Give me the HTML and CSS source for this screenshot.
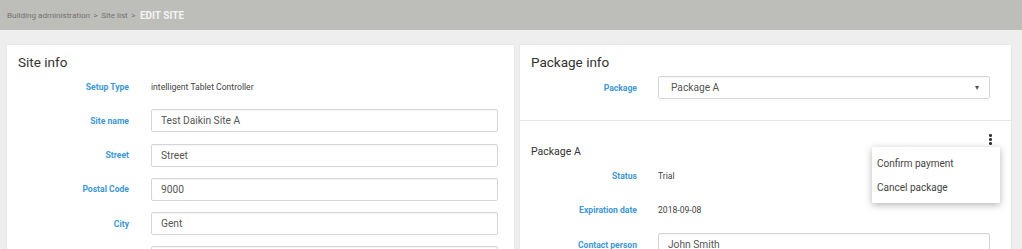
FILE: index.html
```html
<!DOCTYPE html>
<html lang="en">
<head>
    <meta charset="UTF-8">
    <meta name="viewport" content="width=device-width, initial-scale=1.0">
    <title>Edit site</title>
    <link rel="stylesheet" href="styles.css">
</head>
<body>
    <div class="topbar">
        <span class="crumb">Building administration</span>
        <span class="sep">&gt;</span>
        <span class="crumb">Site list</span>
        <span class="sep">&gt;</span>
        <span class="current">EDIT SITE</span>
    </div>

    <div class="main">
        <div class="card card-site">
            <h2>Site info</h2>
            <div class="rows">
                <div class="row">
                    <label>Setup Type</label>
                    <span class="value">intelligent Tablet Controller</span>
                </div>
                <div class="row">
                    <label>Site name</label>
                    <input type="text" value="Test Daikin Site A">
                </div>
                <div class="row">
                    <label>Street</label>
                    <input type="text" value="Street">
                </div>
                <div class="row">
                    <label>Postal Code</label>
                    <input type="text" value="9000">
                </div>
                <div class="row">
                    <label>City</label>
                    <input type="text" value="Gent">
                </div>
                <div class="row">
                    <label></label>
                    <input type="text" value="">
                </div>
            </div>
        </div>

        <div class="card card-package">
            <div class="section section-top">
                <h2>Package info</h2>
                <div class="row">
                    <label>Package</label>
                    <div class="select">
                        <span>Package A</span>
                        <span class="arrow">&#9662;</span>
                    </div>
                </div>
            </div>
            <div class="section section-detail">
                <h3>Package A</h3>
                <div class="kebab"><i></i><i></i><i></i></div>
                <div class="menu">
                    <div class="menu-item">Confirm payment</div>
                    <div class="menu-item">Cancel package</div>
                </div>
                <div class="rows">
                    <div class="row">
                        <label>Status</label>
                        <span class="value">Trial</span>
                    </div>
                    <div class="row">
                        <label>Expiration date</label>
                        <span class="value">2018-09-08</span>
                    </div>
                    <div class="row">
                        <label>Contact person</label>
                        <input type="text" value="John Smith">
                    </div>
                </div>
            </div>
        </div>
    </div>
</body>
</html>
```

FILE: styles.css
```css
body {
    margin: 0;
    font-family: Roboto, 'Liberation Sans', sans-serif;
    background: #eeeeee;
    color: #333;
    height: 249px;
    overflow: hidden;
}
.topbar {
    height: 30px;
    background: #bdbdb9;
    display: flex;
    align-items: center;
    padding-left: 7px;
    gap: 3.5px;
    font-size: 8.1px;
    color: #737373;
}
.topbar .current {
    color: #f4f4f4;
    font-weight: bold;
    font-size: 10px;
    margin-left: 1px;
}
.main {
    display: flex;
    gap: 6px;
    padding: 15px 11px 0 7px;
    align-items: flex-start;
}
.card {
    background: #fff;
    box-shadow: 0 0 1px rgba(0, 0, 0, 0.15);
}
.card-site {
    flex: 0 0 507px;
    height: 260px;
    padding: 7px 16px 0 11px;
    box-sizing: border-box;
}
.card-package {
    flex: 0 0 491px;
    height: 260px;
}
h2 {
    margin: 0;
    font-size: 13.5px;
    font-weight: normal;
    line-height: 20px;
    color: #333;
}
h3 {
    margin: 0;
    font-size: 10.5px;
    font-weight: normal;
    line-height: 16px;
    color: #333;
}
.rows {
    display: flex;
    flex-direction: column;
    gap: 11.25px;
}
.card-site .rows {
    margin-top: 3px;
}
.row {
    display: grid;
    align-items: center;
    height: 23px;
}
.card-site .row {
    grid-template-columns: 111px 347px;
    column-gap: 22px;
}
.card-package .row {
    grid-template-columns: 106px 332px;
    column-gap: 21px;
}
label {
    text-align: right;
    font-size: 8.6px;
    font-weight: bold;
    color: #3d98d3;
}
.value {
    font-size: 8.6px;
    color: #444;
}
input, .select {
    box-sizing: border-box;
    height: 23px;
    width: 100%;
    margin: 0;
    border: 1px solid #d6d6d6;
    border-radius: 2px;
    padding: 0 9px;
    font-family: Roboto, 'Liberation Sans', sans-serif;
    font-size: 10.2px;
    color: #555;
    background: #fff;
    box-shadow: inset 0 1px 1px rgba(0, 0, 0, 0.04);
}
.select {
    display: flex;
    align-items: center;
    justify-content: space-between;
    padding: 0 10px 0 12px;
}
.select .arrow {
    font-size: 8px;
    color: #555;
}
.section {
    padding: 7px 0 0 11px;
    box-sizing: border-box;
}
.section-top {
    height: 76px;
    border-bottom: 1px solid #e6e6e6;
}
.section-top .row {
    margin-top: 4px;
}
.section-detail {
    position: relative;
    padding-top: 23px;
}
.section-detail .rows {
    margin-top: 4px;
    gap: 11.5px;
}
.kebab {
    position: absolute;
    top: 13px;
    left: 469px;
    display: flex;
    flex-direction: column;
    gap: 1.5px;
}
.kebab i {
    display: block;
    width: 2.5px;
    height: 2.5px;
    background: #333;
    border-radius: 50%;
}
.menu {
    position: absolute;
    top: 26px;
    left: 352px;
    width: 128px;
    padding: 5px 0 3px;
    background: #fff;
    box-shadow: 0 2px 7px rgba(0, 0, 0, 0.3);
    z-index: 5;
}
.menu-item {
    height: 24px;
    line-height: 24px;
    padding-left: 5px;
    font-size: 10px;
    color: #444;
}
```
